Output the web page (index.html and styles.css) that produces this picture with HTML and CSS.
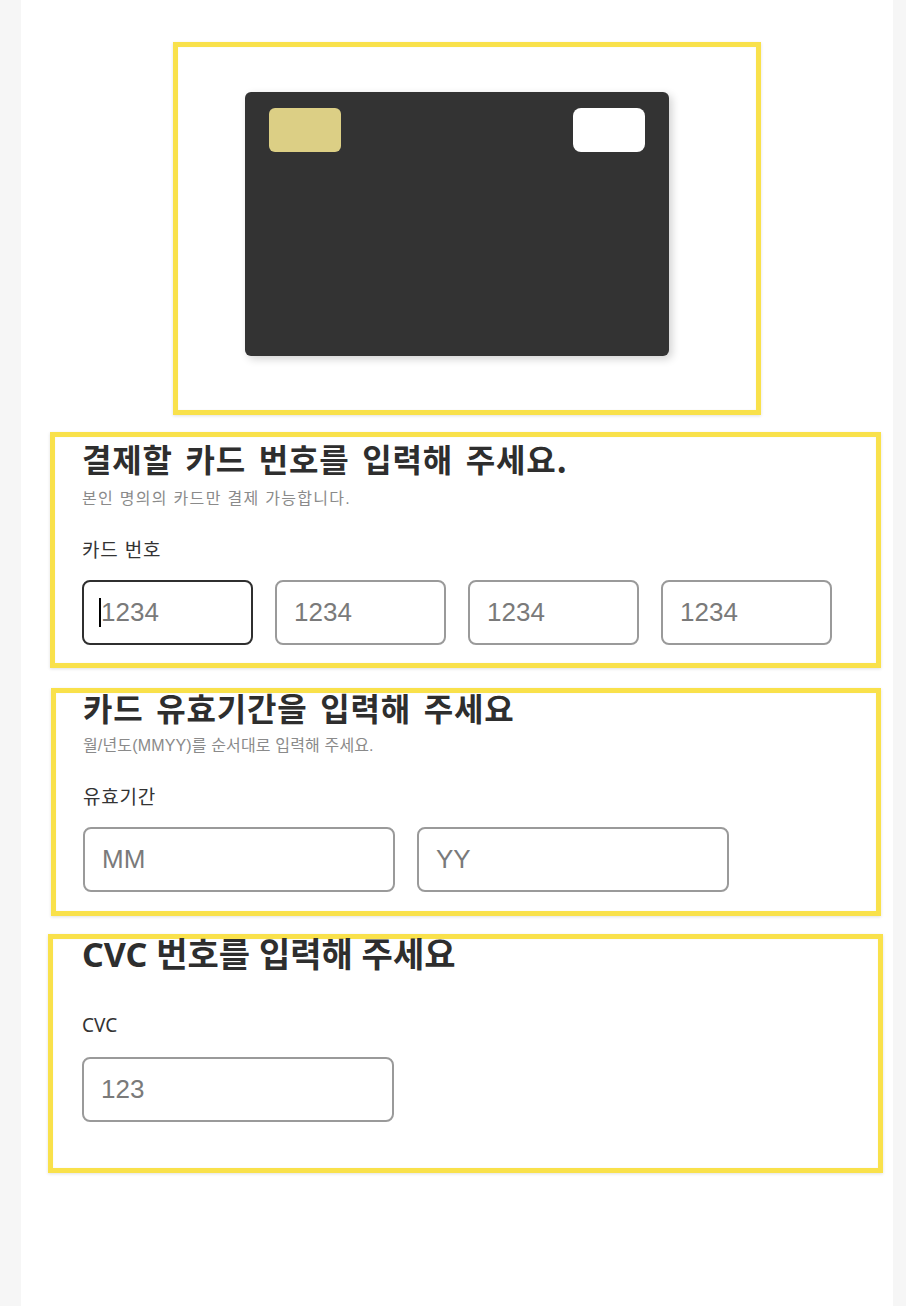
FILE: index.html
```html
<!DOCTYPE html>
<html lang="ko">
<head>
<meta charset="utf-8">
<title>카드 등록</title>
<link rel="stylesheet" href="styles.css">
</head>
<body>
<main class="app">
  <section class="preview mark">
    <div class="card">
      <div class="chip"></div>
      <div class="logo"></div>
    </div>
  </section>

  <section class="form-block mark block-number">
    <h2 class="title">결제할 카드 번호를 입력해 주세요.</h2>
    <p class="subtitle">본인 명의의 카드만 결제 가능합니다.</p>
    <label class="label">카드 번호</label>
    <div class="row row-4">
      <div class="field-wrap">
        <input class="field focused" type="text" placeholder="1234">
        <span class="caret"></span>
      </div>
      <input class="field" type="text" placeholder="1234">
      <input class="field" type="text" placeholder="1234">
      <input class="field" type="text" placeholder="1234">
    </div>
  </section>

  <section class="form-block mark block-expiry">
    <h2 class="title">카드 유효기간을 입력해 주세요</h2>
    <p class="subtitle">월/년도(MMYY)를 순서대로 입력해 주세요.</p>
    <label class="label">유효기간</label>
    <div class="row row-2">
      <input class="field" type="text" placeholder="MM">
      <input class="field" type="text" placeholder="YY">
    </div>
  </section>

  <section class="form-block mark block-cvc">
    <h2 class="title">CVC 번호를 입력해 주세요</h2>
    <label class="label">CVC</label>
    <div class="row row-2">
      <input class="field" type="text" placeholder="123">
    </div>
  </section>
</main>
</body>
</html>
```

FILE: styles.css
```css
* { box-sizing: border-box; }

html, body {
  margin: 0;
  padding: 0;
}

body {
  background: #f6f6f6;
  font-family: "Liberation Sans", "Noto Sans CJK KR", sans-serif;
  color: #333;
}

.app {
  margin-left: 21px;
  width: 872px;
  min-height: 1306px;
  background: #fff;
  padding-top: 42px;
  display: flex;
  flex-direction: column;
  align-items: flex-start;
}

.mark {
  border: 5px solid #f9e14b;
  box-shadow: 0 1px 3px rgba(0, 0, 0, 0.12), inset 0 0 2px rgba(0, 0, 0, 0.06);
}

.preview {
  margin-left: 152px;
  width: 588px;
  height: 373px;
  padding: 45px 0 0 67px;
}

.card {
  width: 424px;
  height: 264px;
  background: #333;
  border-radius: 6px;
  box-shadow: 3px 3px 8px rgba(0, 0, 0, 0.18);
  padding: 16px 24px;
  display: flex;
  justify-content: space-between;
  align-items: flex-start;
}

.chip {
  width: 72px;
  height: 44px;
  border-radius: 6px;
  background: #dccf85;
}

.logo {
  width: 72px;
  height: 44px;
  border-radius: 8px;
  background: #fff;
  filter: blur(0.5px);
}

.form-block {
  display: flex;
  flex-direction: column;
  align-items: flex-start;
  padding-left: 27px;
}

.title {
  margin: 0;
  font-family: "Noto Sans CJK KR", sans-serif;
  font-weight: 700;
  font-size: 32px;
  line-height: 36px;
  color: #2e2e2e;
  letter-spacing: 0.8px;
  word-spacing: 3px;
}

.subtitle {
  margin: 0;
  font-size: 16px;
  line-height: 20px;
  color: #8a8a8a;
}

.label {
  font-family: "Noto Sans CJK KR", sans-serif;
  font-size: 19px;
  line-height: 24px;
  letter-spacing: 0.8px;
  color: #333;
}

.row {
  display: flex;
  gap: 22px;
}

.row-4 .field,
.row-4 .field-wrap { width: 171px; }

.row-2 .field { width: 312px; }

.field-wrap {
  position: relative;
  display: flex;
}

.field {
  height: 65px;
  border: 2px solid #9a9a9a;
  border-radius: 8px;
  padding: 0 0 0 17px;
  font-family: "Liberation Sans", sans-serif;
  font-size: 26px;
  color: #333;
  background: #fff;
  outline: none;
}

.field::placeholder { color: #7a7a7a; }

.field.focused { border-color: #2f2f2f; }

.caret {
  position: absolute;
  left: 17px;
  top: 18px;
  width: 2px;
  height: 29px;
  background: #000;
}

/* section-specific spacing */
.block-number {
  margin-top: 17px;
  margin-left: 29px;
  width: 831px;
  height: 236px;
  padding-top: 3px;
}
.block-number .subtitle { margin-top: 13px; letter-spacing: 1.3px; }
.block-number .label { margin-top: 28px; }
.block-number .row { margin-top: 19px; }

.block-expiry {
  margin-top: 20px;
  margin-left: 30px;
  width: 830px;
  height: 228px;
  padding-top: 0;
}
.block-expiry .title { margin-top: -4px; }
.block-expiry .subtitle { margin-top: 11px; letter-spacing: 0.15px; }
.block-expiry .label { margin-top: 28px; }
.block-expiry .row { margin-top: 19px; }

.block-cvc {
  margin-top: 18px;
  margin-left: 27px;
  width: 835px;
  height: 239px;
  padding-left: 29px;
}
.block-cvc .title {
  margin-top: -3px;
  font-family: "Noto Sans", "Noto Sans CJK KR", sans-serif;
  font-size: 34px;
  letter-spacing: 0;
  word-spacing: 0;
}
.block-cvc .label {
  margin-top: 41px;
  font-family: "Noto Sans", "Noto Sans CJK KR", sans-serif;
  letter-spacing: 0;
}
.block-cvc .row { margin-top: 20px; }
```
